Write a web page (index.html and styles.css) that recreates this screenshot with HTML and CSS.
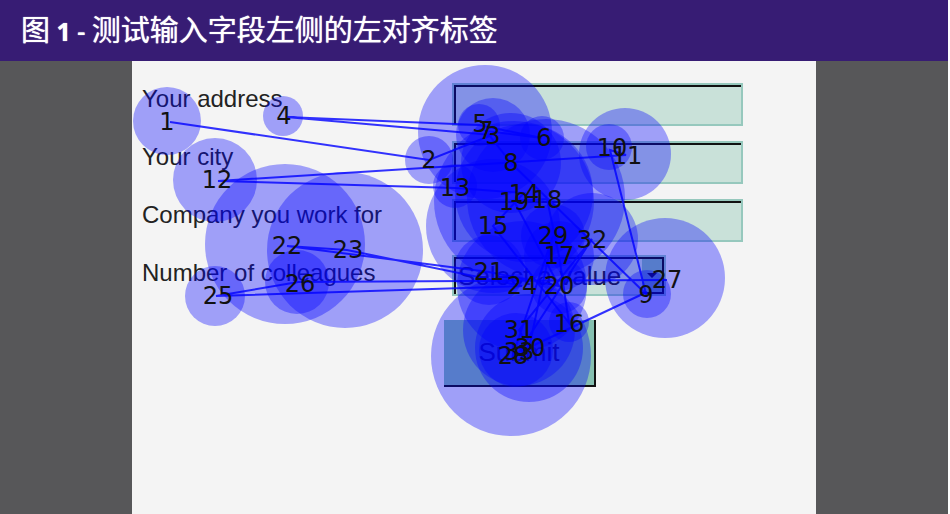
FILE: index.html
```html
<!DOCTYPE html>
<html lang="zh-CN">
<head>
<meta charset="utf-8">
<title>图 1 - 测试输入字段左侧的左对齐标签</title>
<link rel="stylesheet" href="styles.css">
</head>
<body>
<figure class="figure">
  <figcaption class="caption">图<span class="latin"> <strong>1</strong> - </span>测试输入字段左侧的左对齐标签</figcaption>
  <div class="stage">
    <div class="panel">
      <form class="form">
        <label for="address">Your address</label>
        <input id="address" type="text">
        <label for="city">Your city</label>
        <input id="city" type="text">
        <label for="company">Company you work for</label>
        <input id="company" type="text">
        <label for="colleagues">Number of colleagues</label>
        <div class="picker">
          <select id="colleagues"><option>Select a value</option></select>
          <svg class="arrow" viewBox="0 0 20 35" width="20" height="35" aria-hidden="true">
            <rect width="20" height="33" fill="#85bfb0"/>
            <path d="M5 14h10l-5 5zM0 33h20v2H0z" fill="#111"/>
          </svg>
        </div>
        <button class="submit" type="button">Submit</button>
      </form>
      <svg class="gaze" viewBox="132 61 684 453" width="684" height="453" aria-hidden="true">
        <g class="spots">
          <circle cx="167" cy="121" r="34"/>
          <circle cx="429" cy="160" r="24"/>
          <circle cx="485" cy="132" r="67"/>
          <circle cx="283" cy="116" r="20"/>
          <circle cx="479" cy="125" r="21"/>
          <circle cx="542" cy="138" r="22"/>
          <circle cx="493" cy="135" r="37"/>
          <circle cx="511" cy="163" r="50"/>
          <circle cx="647" cy="294" r="24"/>
          <circle cx="609" cy="147" r="23"/>
          <circle cx="625" cy="154" r="46"/>
          <circle cx="215" cy="180" r="42"/>
          <circle cx="455" cy="186" r="22"/>
          <circle cx="524" cy="193" r="69"/>
          <circle cx="493" cy="226" r="67"/>
          <circle cx="569" cy="322" r="20"/>
          <circle cx="559" cy="256" r="35"/>
          <circle cx="546" cy="198" r="79"/>
          <circle cx="514" cy="201" r="80"/>
          <circle cx="559" cy="286" r="28"/>
          <circle cx="489" cy="270" r="35"/>
          <circle cx="285" cy="244" r="80"/>
          <circle cx="345" cy="250" r="78"/>
          <circle cx="522" cy="286" r="65"/>
          <circle cx="215" cy="296" r="30"/>
          <circle cx="297" cy="282" r="32"/>
          <circle cx="665" cy="278" r="60"/>
          <circle cx="511" cy="356" r="80"/>
          <circle cx="553" cy="236" r="32"/>
          <circle cx="529" cy="348" r="54"/>
          <circle cx="519" cy="330" r="56"/>
          <circle cx="592" cy="239" r="46"/>
          <circle cx="516" cy="350" r="37"/>
        </g>
        <polyline class="path" points="170,122 429,160 492,135 286,117 479,125 542,138 486,131 511,163 646,294 610,150 626,155 218,181 455,188 524,193 493,226 569,323 559,256 547,199 514,201 559,286 489,272 287,246 347,250 522,286 216,296 298,282 667,280"/>
        <polyline class="path" points="647,292 513,355 553,236 529,348 519,330 592,239 519,352"/>
        <g class="numbers">
          <text x="167" y="130">1</text>
          <text x="429" y="168">2</text>
          <text x="493" y="144">3</text>
          <text x="284" y="124">4</text>
          <text x="480" y="132">5</text>
          <text x="544" y="146">6</text>
          <text x="486" y="139">7</text>
          <text x="511" y="171">8</text>
          <text x="646" y="303">9</text>
          <text x="612" y="156">10</text>
          <text x="627" y="164">11</text>
          <text x="217" y="188">12</text>
          <text x="455" y="196">13</text>
          <text x="524" y="202">14</text>
          <text x="493" y="234">15</text>
          <text x="569" y="332">16</text>
          <text x="559" y="264">17</text>
          <text x="547" y="208">18</text>
          <text x="514" y="210">19</text>
          <text x="559" y="294">20</text>
          <text x="489" y="280">21</text>
          <text x="287" y="254">22</text>
          <text x="348" y="258">23</text>
          <text x="522" y="294">24</text>
          <text x="218" y="304">25</text>
          <text x="300" y="292">26</text>
          <text x="667" y="288">27</text>
          <text x="513" y="364">28</text>
          <text x="553" y="244">29</text>
          <text x="530" y="356">30</text>
          <text x="519" y="338">31</text>
          <text x="592" y="248">32</text>
          <text x="519" y="360">33</text>
        </g>
      </svg>
    </div>
  </div>
</figure>
</body>
</html>
```
FILE: styles.css
```css
* { box-sizing: border-box; }

body {
  margin: 0;
  background: #fff;
  font-family: "Liberation Sans", sans-serif;
}

.figure {
  display: flex;
  flex-direction: column;
  min-height: 100vh;
  margin: 0 2px 0 0;
}

.caption {
  padding: 10px 21px;
  background: #371c74;
  color: #fff;
  font: 400 29px/40px "Open Sans", "Noto Sans CJK SC", sans-serif;
  text-shadow: 0 0 1px #fff;
}

.latin {
  font-size: 25px;
  font-weight: 600;
}

.latin strong { font-weight: 700; }

.stage {
  display: flex;
  flex: 1;
  justify-content: center;
  background: #575759;
}

.panel {
  position: relative;
  flex: 0 1 684px;
  background: #f4f4f4;
}

.form {
  display: grid;
  grid-template-columns: 310px 291px;
  row-gap: 15px;
  padding: 22px 10px;
  font-size: 24px;
  line-height: 32px;
  color: #222;
}

.form input,
.form select {
  height: 43px;
  margin: 0;
  padding: 0 4px;
  border: 2px solid #96c8bd;
  border-radius: 0;
  background: #c9e1d9;
  box-shadow: inset 0 2px #111, inset 2px 0 #111;
  color: #222;
  font: 24px "Liberation Sans", sans-serif;
}

.picker {
  position: relative;
  width: 214px;
  height: 41px;
  margin-top: -2px;
}

.form select {
  display: block;
  width: 100%;
  height: 100%;
  appearance: none;
  box-shadow: inset 0 2px #111, inset 2px 0 #111, inset -2px 0 #111;
  font-size: 26px;
}

.arrow {
  position: absolute;
  top: 4px;
  right: 4px;
}

.submit {
  grid-column: 2;
  width: 152px;
  height: 67px;
  margin: 9px 0 0 -8px;
  border: 0 solid #111;
  border-width: 0 2px 2px 0;
  background: #85bfb0;
  color: #222;
  font: 26px "Liberation Sans", sans-serif;
}

.gaze {
  position: absolute;
  top: 0;
  left: 0;
}

.spots { fill: #00f; fill-opacity: 0.35; }

.path {
  fill: none;
  stroke: #00f;
  stroke-opacity: 0.8;
  stroke-width: 2;
}

.numbers {
  fill: #111;
  font: 24px "DejaVu Sans", sans-serif;
  text-anchor: middle;
}
```
